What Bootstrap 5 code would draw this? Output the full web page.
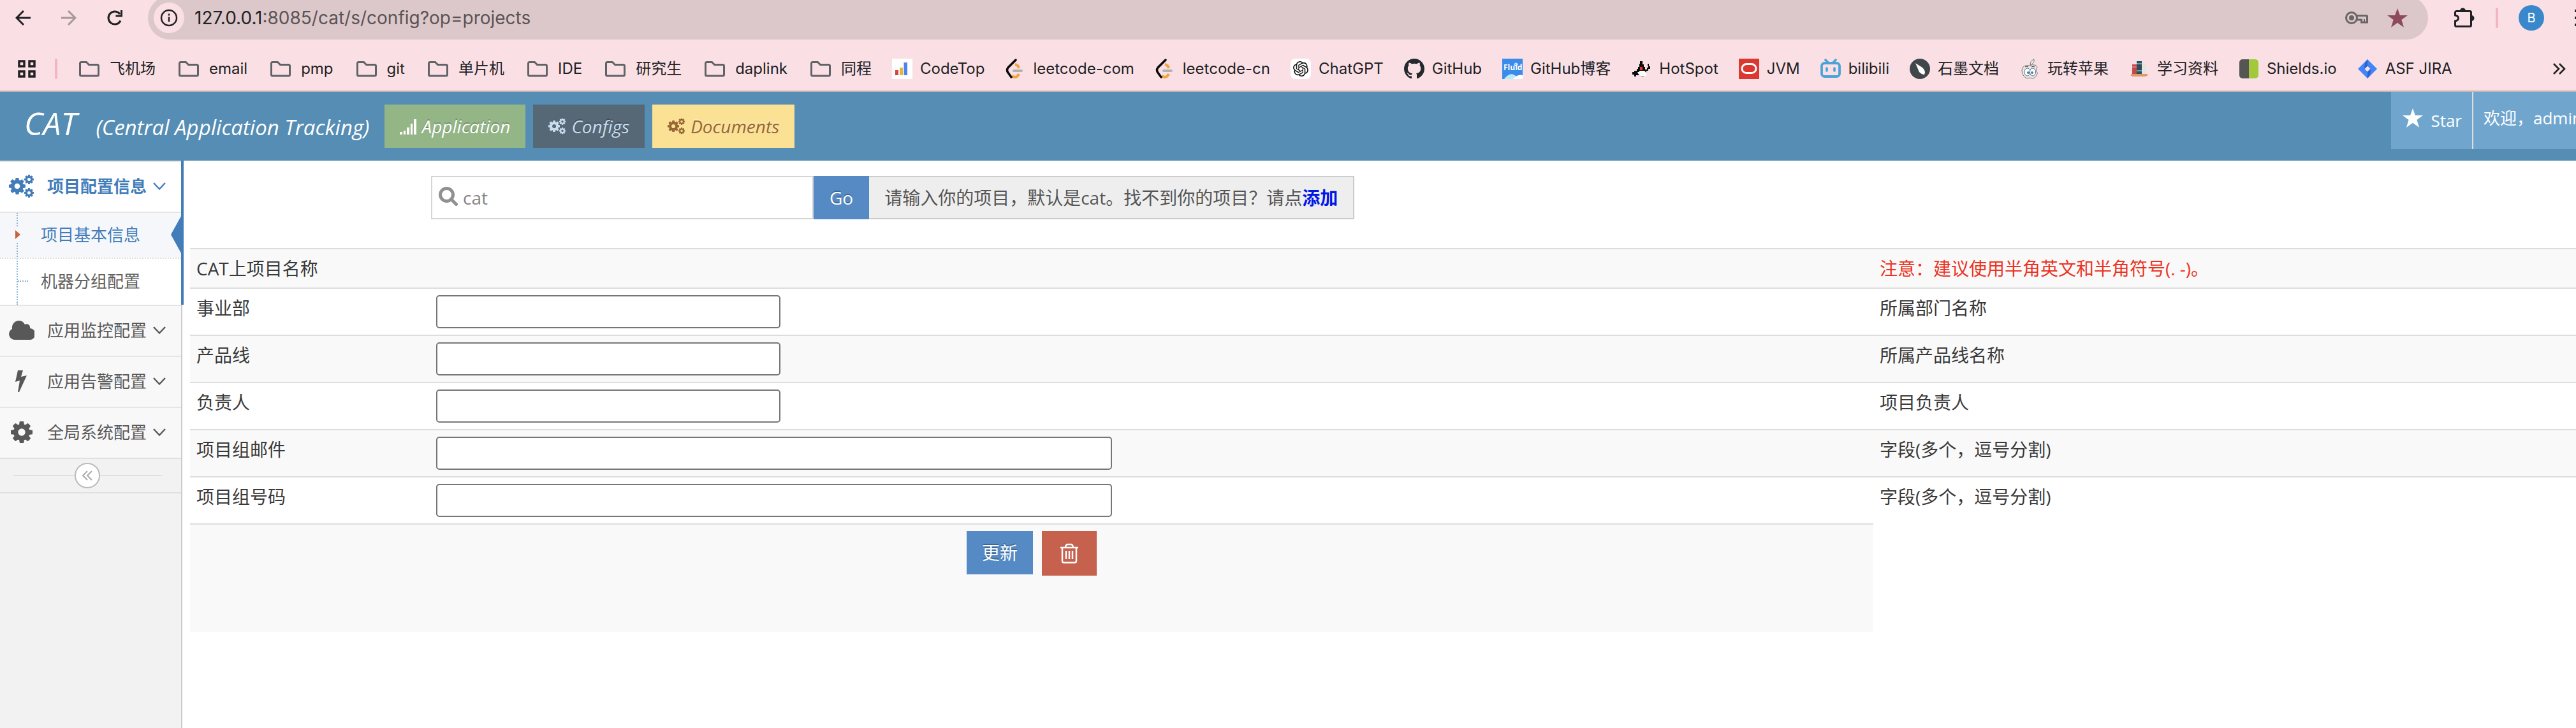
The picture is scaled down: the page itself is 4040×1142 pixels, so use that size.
<!DOCTYPE html>
<html lang="zh-CN">
<head>
<meta charset="utf-8">
<meta name="viewport" content="width=device-width, initial-scale=1">
<title>CAT - 项目基本信息</title>
<link href="https://cdn.jsdelivr.net/npm/bootstrap@5.3.0/dist/css/bootstrap.min.css" rel="stylesheet">
<style>
:root { --cat-blue: #568db4; --cat-active: #437db9; --cat-line: #ddd; }
body { font-family: "Open Sans", "Noto Sans CJK SC", sans-serif; font-size: 28px; line-height: 40px; color: #393939; background: #fff; overflow-x: hidden; min-height: 100vh; }
svg { display: block; flex-shrink: 0; }
a { text-decoration: none; }

/* Browser chrome */
.browser { background: #fae0e4; font-family: Inter, "Noto Sans CJK SC", sans-serif; color: #202124; border-bottom: 2px solid #c9b2b7; }
.toolbar { height: 74px; overflow: hidden; }
.tool { height: 56px; border: 0; background: none; padding: 0; color: #202124; flex-shrink: 0; }
.tool-nav { width: 72px; }
.omnibox { height: 68px; margin-top: -6px; border-radius: 34px; background: #dcc8ca; padding: 0 32px 0 9px; }
.site-info { width: 48px; height: 48px; border-radius: 50%; background: #fae0e4; }
.url { font-size: 28px; color: #5a5354; }
.url-host { color: #202124; }
.fav-star { color: #8c4a5c; margin-left: 30px; }
.split { width: 4px; height: 32px; border-radius: 2px; background: #f4b4c0; flex-shrink: 0; }
.avatar { width: 40px; height: 40px; border-radius: 50%; background: #3a88cc; color: #fff; font-size: 20px; }
.bookmarks { height: 68px; padding: 0 16px 0 28px; font-size: 24px; line-height: 32px; }
.bookmarks > .split { margin-left: 30px; }
.bookmarks a { color: #202124; white-space: nowrap; }
.bookmark-list { gap: 32px; margin-left: 30px; }
.bookmark { gap: 12px; }

/* Application header */
.app-bar { background: var(--cat-blue); height: 108px; color: #fff; }
.brand { padding-bottom: 4px; }
.brand-name { font-style: italic; font-size: 50px; margin-left: 38px; }
.brand-sub { font-style: italic; font-size: 33px; margin-left: 30px; margin-right: 24px; }
.btn-flat { height: 68px; padding: 0 24px; border: 0; border-radius: 0; font-size: 28px; line-height: 40px; color: #fff; text-shadow: 0 -2px 0 rgba(0,0,0,.25); display: inline-flex; align-items: center; justify-content: center; }
.btn-flat:hover { color: #fff; }
.btn-top { font-style: italic; margin-right: 12px; gap: 8px; }
.btn-app { background: #94b687; }
.btn-conf { background: #566776; color: #c8ddee; }
.btn-docs { background: #fbe194; color: #966635; text-shadow: 0 -2px 0 rgba(255,255,255,.4); }
.btn-go, .btn-update { background: #558ac5; }
.btn-drop { background: #c5614d; height: 70px; }
.btn-go { padding: 0 25px; }
.top-links { font-size: 26px; height: 90px; }
.top-links a { color: #fff; background: #70a6ce; white-space: nowrap; overflow: hidden; }
.top-star { padding: 0 16px 0 18px; gap: 12px; border-right: 2px solid #ddd; }
.top-user { width: 161px; padding-left: 16px; padding-bottom: 8px; }

/* Sidebar */
.side { width: 286px; flex-shrink: 0; background: #f2f2f2; border-right: 2px solid #ccc; font-size: 26px; }
.side-group { border-top: 2px solid #e5e5e5; background: #f8f8f8; position: relative; }
.side-head { height: 78px; padding: 0 24px 2px 14px; color: #585858; }
.side-icon { width: 44px; margin-right: 16px; }
.side-group.open { background: #fff; }
.side-group.open .side-head { color: var(--cat-active); font-weight: bold; }
.side-group.open::after { content: ""; position: absolute; top: -2px; bottom: 0; right: -4px; width: 4px; background: var(--cat-active); }
.side-sub { border-top: 2px solid #e5e5e5; position: relative; }
.side-sub::before { content: ""; position: absolute; left: 26px; top: 0; bottom: 0; border-left: 2px dotted #8fb4d4; z-index: 1; }
.side-sub a { height: 72px; padding-left: 64px; padding-bottom: 2px; color: #616161; position: relative; }
.side-sub a.current { background: #f5f7fb; color: var(--cat-active); border-bottom: 2px dotted #e0e0e0; }
.side-sub a:not(.current)::before { content: ""; position: absolute; left: 28px; width: 16px; top: 34px; border-top: 2px dotted #8fb4d4; }
.side-sub a.current { z-index: 1; background: transparent; }
.side-sub { background: linear-gradient(#f5f7fb 70px, #fff 70px); }
.caret { position: absolute; left: 22px; background: #f5f7fb; }
.pointer { position: absolute; right: 0; }
.side-toggle { height: 56px; border-top: 2px solid #e0e0e0; border-bottom: 2px solid #e0e0e0; padding: 0 30px 0 20px; }
.side-toggle hr { flex: 1; margin: 0; border-top: 2px solid #e0e0e0; opacity: 1; }
.round { width: 40px; height: 40px; border: 2px solid #bbb; border-radius: 50%; background: #fff; padding: 0; color: #aaa; }

/* Content */
.main-area { padding: 24px 0 0 12px; }
.search { margin-left: 378px; margin-bottom: 45px; height: 68px; }
.search-box { width: 600px; border: 2px solid #d5d5d5; padding: 0 10px; gap: 8px; color: #909090; }
.search-box svg { margin-bottom: 4px; }
.search-box input { border: 0; outline: 0; padding: 0; width: 100%; background: none; color: #858585; }
.search-box input::placeholder { color: #858585; }
.search-tip { background: #eee; border: 2px solid #ccc; border-left: 0; padding: 0 24px; color: #555; }
.search-tip a { color: #0017e8; font-weight: bold; }
.project-table { border-collapse: separate; border-spacing: 0; width: 100%; table-layout: fixed; }
.project-table td, .project-table th { border-top: 2px solid var(--cat-line); padding: 10px; vertical-align: top; font-weight: normal; }
.project-table tr:nth-child(odd) > * { background: #f9f9f9; }
.project-table input { display: block; height: 52px; border: 2px solid #767676; border-radius: 5px; background: #fff; padding: 0 8px; max-width: 100%; }
.col-label { width: 376px; }
.col-field { width: 60.5%; }
.w-short { width: 540px; }
.w-long { width: 1060px; }
.project-table .actions { height: 170px; }
.actions div { gap: 14px; }
.notice { color: #ec3323; }
</style>
</head>
<body class="d-flex flex-column">

<svg width="0" height="0" class="position-absolute" aria-hidden="true">
  <defs>
    <symbol id="cog" viewBox="128 128 1536 1536"><path fill="currentColor" d="M1152 896q0-106-75-181t-181-75-181 75-75 181 75 181 181 75 181-75 75-181zm512-109v222q0 12-8 23t-20 13l-185 28q-19 54-39 91 35 50 107 138 10 12 10 25t-9 23q-27 37-99 108t-94 71q-12 0-26-9l-138-108q-44 23-91 38-16 136-29 186-7 28-36 28h-222q-14 0-24.500-8.500t-11.500-21.500l-28-184q-49-16-90-37l-141 107q-10 9-25 9-14 0-25-11-126-114-165-168-7-10-7-23 0-12 8-23 15-21 51-66.500t54-70.500q-27-50-41-99l-183-27q-13-2-21-12.500t-8-23.500v-222q0-12 8-23t19-13l186-28q14-46 39-92-40-57-107-138-10-12-10-24 0-10 9-23 26-36 98.500-107.500t94.500-71.500q13 0 26 10l138 107q44-23 91-38 16-136 29-186 7-28 36-28h222q14 0 24.500 8.500t11.500 21.500l28 184q49 16 90 37l142-107q9-9 24-9 13 0 25 10 129 119 165 170 7 8 7 22 0 12-8 23-15 21-51 66.500t-54 70.500q26 50 41 98l183 28q13 2 21 12.500t8 23.500z"/></symbol>
    <symbol id="cogs" viewBox="0 0 40 36"><use href="#cog" x="0" y="5" width="26" height="26"/><use href="#cog" x="24" y="0" width="15" height="15"/><use href="#cog" x="24" y="21" width="15" height="15"/></symbol>
    <symbol id="folder" viewBox="0 0 40 32"><path d="M5.500 25V7.500a2 2 0 0 1 2-2h8l4 4h13a2 2 0 0 1 2 2V25a2 2 0 0 1-2 2h-25a2 2 0 0 1-2-2z" fill="none" stroke="#5f6368" stroke-width="3"/></symbol>
    <symbol id="star" viewBox="0 0 32 30"><path fill="currentColor" d="M16 0l3.900 11H32l-9.600 7.100L26 30l-10-7.200L6 30l3.600-11.900L0 11h12.100z"/></symbol>
    <symbol id="down" viewBox="0 0 20 12"><path d="M1 1l9 9.500L19 1" fill="none" stroke="currentColor" stroke-width="2.400"/></symbol>
    <symbol id="leet" viewBox="0 0 32 32"><path d="M16 9q5 1 6 6" fill="none" stroke="#f2a33c" stroke-width="4"/><path d="M11 27q7 5 11-3" fill="none" stroke="#f2a33c" stroke-width="4"/><path d="M14 19h12" stroke="#b3b3b3" stroke-width="4" stroke-linecap="round"/><path d="M17 2L5 14q-3 4 0 8l5 7" fill="none" stroke="#0a0a0a" stroke-width="3.500" stroke-linecap="round"/></symbol>
  </defs>
</svg>

<div class="browser">
  <div class="toolbar d-flex align-items-start">
    <button class="tool tool-nav d-flex align-items-center ps-4" aria-label="后退"><svg width="24" height="26" viewBox="0 0 24 26"><path d="M24 13H2M13 2L2 13l11 11" fill="none" stroke="currentColor" stroke-width="3"/></svg></button>
    <button class="tool tool-nav d-flex align-items-center ps-4" aria-label="前进"><svg width="24" height="26" viewBox="0 0 24 26"><path d="M0 13h22M11 2l11 11-11 11" fill="none" stroke="#a5979a" stroke-width="3"/></svg></button>
    <button class="tool d-flex align-items-center ps-4 pe-4" aria-label="重新加载"><svg width="24" height="26" viewBox="0 0 24 26"><path d="M21 17.500A10 10 0 1 1 20 7" fill="none" stroke="currentColor" stroke-width="3"/><path d="M22.500 1v9h-9" fill="none" stroke="currentColor" stroke-width="3"/></svg></button>
    <div class="omnibox d-flex align-items-center flex-grow-1 ms-3">
      <button class="site-info btn p-0 border-0 d-flex align-items-center justify-content-center" aria-label="网站信息"><svg width="28" height="28" viewBox="0 0 28 28"><circle cx="14" cy="14" r="12" fill="none" stroke="#202124" stroke-width="2.500"/><path d="M14 12.500V20M14 7.500v3" stroke="#202124" stroke-width="2.500"/></svg></button>
      <div class="url ms-3"><span class="url-host">127.0.0.1</span>:8085/cat/s/config?op=projects</div>
      <svg class="ms-auto" width="36" height="22" viewBox="0 0 36 22"><circle cx="10" cy="11" r="8.500" fill="none" stroke="#6a6566" stroke-width="3"/><circle cx="10" cy="11" r="4" fill="#6a6566"/><path d="M18 7.500h15a1.500 1.500 0 0 1 1.500 1.500v9h-9v-4H18" fill="none" stroke="#6a6566" stroke-width="3"/><path d="M30 13v5" stroke="#6a6566" stroke-width="2"/></svg>
      <svg class="fav-star" width="32" height="30"><use href="#star"/></svg>
    </div>
    <button class="tool d-flex align-items-center ms-4 ps-3" aria-label="扩展程序"><svg width="34" height="34" viewBox="0 0 34 34"><path d="M4 6.500h21.500a2 2 0 0 1 2 2v20a2 2 0 0 1-2 2H4.500a2 2 0 0 1-2-2V22q5-1 5-4.500t-5-4.500V8.500a2 2 0 0 1 2-2" fill="none" stroke="#202124" stroke-width="3"/><path d="M10 6a4.500 4.500 0 0 1 9 0zM28 13a4.500 4.500 0 0 1 0 9z" fill="#202124"/></svg></button>
    <div class="tool d-flex align-items-center px-3 mx-3"><span class="split"></span></div>
    <div class="tool d-flex align-items-center"><span class="avatar d-flex align-items-center justify-content-center">B</span></div>
    <div class="tool d-flex align-items-center ps-5"><svg width="2" height="26" viewBox="0 0 2 26"><path d="M1 0v4M1 11v4M1 22v4" stroke="#202124" stroke-width="2"/></svg></div>
  </div>

  <nav class="bookmarks d-flex align-items-center" aria-label="书签栏">
    <svg width="28" height="28" viewBox="0 0 28 28"><path d="M2 2h8v8H2zM18 2h8v8h-8zM2 18h8v8H2zM18 18h8v8h-8z" fill="none" stroke="#202124" stroke-width="3.500"/></svg>
    <span class="split"></span>
    <div class="bookmark-list d-flex align-items-center">
      <a class="bookmark d-flex align-items-center" href="#"><svg width="40" height="32"><use href="#folder"/></svg>飞机场</a>
      <a class="bookmark d-flex align-items-center" href="#"><svg width="40" height="32"><use href="#folder"/></svg>email</a>
      <a class="bookmark d-flex align-items-center" href="#"><svg width="40" height="32"><use href="#folder"/></svg>pmp</a>
      <a class="bookmark d-flex align-items-center" href="#"><svg width="40" height="32"><use href="#folder"/></svg>git</a>
      <a class="bookmark d-flex align-items-center" href="#"><svg width="40" height="32"><use href="#folder"/></svg>单片机</a>
      <a class="bookmark d-flex align-items-center" href="#"><svg width="40" height="32"><use href="#folder"/></svg>IDE</a>
      <a class="bookmark d-flex align-items-center" href="#"><svg width="40" height="32"><use href="#folder"/></svg>研究生</a>
      <a class="bookmark d-flex align-items-center" href="#"><svg width="40" height="32"><use href="#folder"/></svg>daplink</a>
      <a class="bookmark d-flex align-items-center" href="#"><svg width="40" height="32"><use href="#folder"/></svg>同程</a>
      <a class="bookmark d-flex align-items-center" href="#"><svg width="32" height="32"><path fill="#fff" d="M0 0h32v32H0z"/><path fill="#cb4a3b" d="M5 18h5v8H5z"/><path fill="#eab33a" d="M12 14h5v12h-5z"/><path fill="#4a84f0" d="M18.500 6h5.500v20h-5.500z"/></svg>CodeTop</a>
      <a class="bookmark d-flex align-items-center" href="#"><svg width="32" height="32"><use href="#leet"/></svg>leetcode-com</a>
      <a class="bookmark d-flex align-items-center" href="#"><svg width="32" height="32"><use href="#leet"/></svg>leetcode-cn</a>
      <a class="bookmark d-flex align-items-center" href="#"><svg width="32" height="32" viewBox="0 0 32 32"><rect width="32" height="32" rx="7" fill="#fff"/><path transform="translate(4 4)" fill="#111" d="M22.282 9.821a5.985 5.985 0 0 0-.516-4.911 6.046 6.046 0 0 0-6.510-2.900A6.065 6.065 0 0 0 4.981 4.182a5.985 5.985 0 0 0-3.998 2.900 6.046 6.046 0 0 0 .743 7.097 5.980 5.980 0 0 0 .511 4.911 6.051 6.051 0 0 0 6.515 2.900A5.985 5.985 0 0 0 13.260 24a6.056 6.056 0 0 0 5.772-4.206 5.989 5.989 0 0 0 3.998-2.900 6.056 6.056 0 0 0-.748-7.073zm-9.022 12.608a4.476 4.476 0 0 1-2.876-1.041l.142-.080 4.778-2.758a.795.795 0 0 0 .393-.681v-6.737l2.020 1.169a.071.071 0 0 1 .038.052v5.583a4.504 4.504 0 0 1-4.495 4.494zm-9.661-4.125a4.471 4.471 0 0 1-.535-3.014l.142.085 4.783 2.758a.771.771 0 0 0 .781 0l5.843-3.369v2.332a.080.080 0 0 1-.033.062L9.740 19.950a4.499 4.499 0 0 1-6.141-1.646zM2.341 7.896a4.485 4.485 0 0 1 2.366-1.973V11.600a.766.766 0 0 0 .388.677l5.814 3.354-2.020 1.169a.076.076 0 0 1-.071 0l-4.830-2.787A4.504 4.504 0 0 1 2.341 7.872zm16.596 3.856L13.104 8.364 15.119 7.200a.076.076 0 0 1 .071 0l4.830 2.791a4.494 4.494 0 0 1-.677 8.104v-5.677a.790.790 0 0 0-.407-.667zm2.011-3.023l-.142-.085-4.774-2.782a.776.776 0 0 0-.785 0L9.409 9.230V6.897a.066.066 0 0 1 .028-.062l4.830-2.787a4.499 4.499 0 0 1 6.680 4.660zM8.307 12.863l-2.020-1.164a.080.080 0 0 1-.038-.057V6.074a4.499 4.499 0 0 1 7.376-3.454l-.142.081L8.704 5.459a.795.795 0 0 0-.393.681zm1.098-2.365l2.602-1.500 2.607 1.500v2.999l-2.597 1.500-2.607-1.500Z"/></svg>ChatGPT</a>
      <a class="bookmark d-flex align-items-center" href="#"><svg width="32" height="32" viewBox="0 0 16 16"><path fill="#24292e" d="M8 0C3.580 0 0 3.580 0 8c0 3.540 2.290 6.530 5.470 7.590.4.070.55-.17.55-.38 0-.19-.010-.82-.010-1.490-2.010.37-2.530-.49-2.690-.94-.090-.23-.48-.94-.82-1.130-.28-.15-.68-.52-.010-.53.63-.010 1.080.58 1.230.82.72 1.210 1.870.87 2.330.66.070-.52.28-.87.51-1.070-1.780-.2-3.640-.89-3.640-3.950 0-.87.31-1.590.82-2.150-.080-.2-.36-1.020.080-2.120 0 0 .67-.21 2.200.82.64-.18 1.320-.27 2-.27s1.360.090 2 .27c1.530-1.040 2.200-.82 2.200-.82.44 1.100.16 1.920.080 2.120.51.56.82 1.270.82 2.150 0 3.070-1.870 3.750-3.650 3.950.29.25.54.73.54 1.480 0 1.070-.010 1.930-.010 2.200 0 .21.15.46.55.38A8.010 8.010 0 0 0 16 8c0-4.420-3.580-8-8-8z"/></svg>GitHub</a>
      <a class="bookmark d-flex align-items-center" href="#"><svg width="32" height="32" viewBox="0 0 32 32"><path fill="#3b8bea" d="M0 0h32v32H0z"/><path fill="#b9ecfb" d="M3 32q10-13 19-4l2 4z"/><path fill="#fff" d="M17 32q7-8 15-6v6z"/><text x="2" y="18" font-family="Open Sans" font-weight="bold" font-size="12" fill="#fff">Fluid</text><circle cx="21.500" cy="9" r="2" fill="none" stroke="#fff" stroke-width="1.200"/></svg>GitHub博客</a>
      <a class="bookmark d-flex align-items-center" href="#"><svg width="32" height="32" viewBox="0 0 32 32"><path fill="#0a0a0a" d="M14 4h4v5h2v4h2v4h3v-3h2v-3h-1V8h2v4h2v4h-3v3h-3v8h-3v-6h-8v5H8v2H5v-3H2v-4h3v-2h4v-3h2v-3h2V8h1z"/><path fill="#fff" d="M10 21h3v-2h8l3 3v5h-9v-2h-3z"/><path fill="#e23b20" d="M14 13h4v5h-4z"/><path fill="#6a3" d="M16 27h4v1h-4z"/></svg>HotSpot</a>
      <a class="bookmark d-flex align-items-center" href="#"><svg width="32" height="32" viewBox="0 0 32 32"><path fill="#db3832" d="M0 0h32v32H0z"/><rect x="5" y="8.500" width="22" height="14" rx="7" fill="none" stroke="#fff" stroke-width="3"/></svg>JVM</a>
      <a class="bookmark d-flex align-items-center" href="#"><svg width="32" height="32" viewBox="0 0 32 32"><rect x="2" y="7" width="28" height="21" rx="4.500" fill="none" stroke="#4aa3d8" stroke-width="3.800"/><path d="M8 2l4 4M24 2l-4 4M10 15v4M22 15v4" stroke="#4aa3d8" stroke-width="3.600" stroke-linecap="round"/></svg>bilibili</a>
      <a class="bookmark d-flex align-items-center" href="#"><svg width="32" height="32" viewBox="0 0 32 32"><circle cx="16" cy="16" r="16" fill="#41464a"/><path fill="#fff" d="M9 7l11 7q6 6 3 11-4 0-8-4z"/></svg>石墨文档</a>
      <a class="bookmark d-flex align-items-center" href="#"><svg width="32" height="32" viewBox="0 0 32 32"><path d="M17 10q0-7 6-9 1 6-6 9z" fill="#eee" stroke="#777"/><path d="M16 11q5-2.500 10-.5 2 1.500 2 3-4 4 .5 9-2 7-7 8.500l-5-1-5 1Q4 27 4 18q1-9 12-7z" fill="#e8e8e8" stroke="#777"/><ellipse cx="12.500" cy="21" rx="4.500" ry="6" fill="#fff" stroke="#666"/><ellipse cx="21" cy="21" rx="4.500" ry="6" fill="#fff" stroke="#666"/><circle cx="14" cy="22" r="2" fill="#3a7fc4"/><circle cx="20" cy="22" r="2" fill="#3a7fc4"/><path d="M9 13q3-2 5 0M19 13q3-2 5 0" fill="none" stroke="#333"/></svg>玩转苹果</a>
      <a class="bookmark d-flex align-items-center" href="#"><svg width="32" height="32" viewBox="0 0 32 32"><path fill="#c04a48" d="M5 9h7v15H5z"/><path fill="#34495e" d="M12 4h8v20h-8z"/><path fill="#e3e6de" d="M20 7h7v17h-7z"/><path stroke="#f0b6a8" d="M5 13h7"/><path stroke="#5aa" stroke-width="2" d="M12 8h8M12 19h8"/><path fill="#dd9a66" d="M3 24h26v3h-2v1H5v-1H3z"/></svg>学习资料</a>
      <a class="bookmark d-flex align-items-center" href="#"><svg width="32" height="32" viewBox="0 0 32 32"><path fill="#555" d="M16 1H6a5 5 0 0 0-5 5v20a5 5 0 0 0 5 5h10z"/><path fill="#a2c93c" d="M16 1h10a5 5 0 0 1 5 5v20a5 5 0 0 1-5 5H16z"/></svg>Shields.io</a>
      <a class="bookmark d-flex align-items-center" href="#"><svg width="32" height="32" viewBox="0 0 32 32"><path fill="#4285f7" fill-rule="evenodd" d="M16 1l15 15-15 15L1 16zM16 11.500L11.500 16l4.500 4.500 4.500-4.500z"/><path fill="#2a60d0" d="M16 1v10.500l-4.500 4.500Q10 8 16 1zM16 31V20.500l4.500-4.500q1.500 8-4.500 15z"/></svg>ASF JIRA</a>
    </div>
    <button class="btn p-0 border-0 ms-auto" aria-label="更多书签"><svg width="20" height="18" viewBox="0 0 20 18"><path d="M1 1l8 8-8 8M10 1l8 8-8 8" fill="none" stroke="#202124" stroke-width="2.600"/></svg></button>
  </nav>
</div>

<header class="app-bar d-flex">
  <div class="d-flex align-items-center">
    <div class="brand d-flex align-items-baseline"><span class="brand-name">CAT</span><span class="brand-sub">(Central Application Tracking)</span></div>
    <a class="btn-flat btn-top btn-app" href="#"><svg width="26" height="26" viewBox="0 0 26 26"><path fill="currentColor" d="M0 22h4v4H0zM6 20h3v6H6zM11 15h4v11h-4zM17 9h3v17h-3zM22 2h4v24h-4z"/></svg>Application</a>
    <a class="btn-flat btn-top btn-conf" href="#"><svg width="28" height="26"><use href="#cogs"/></svg>Configs</a>
    <a class="btn-flat btn-top btn-docs" href="#"><svg width="28" height="26"><use href="#cogs"/></svg>Documents</a>
  </div>
  <div class="top-links d-flex ms-auto">
    <a class="top-star d-flex align-items-center" href="#"><svg class="mb-2" width="32" height="30"><use href="#star"/></svg>Star</a>
    <a class="top-user d-flex align-items-center" href="#">欢迎，admin</a>
  </div>
</header>

<div class="d-flex flex-grow-1">
  <nav class="side" aria-label="配置菜单">
    <div class="side-group open">
      <a class="side-head d-flex align-items-center" href="#"><span class="side-icon"><svg width="40" height="36"><use href="#cogs"/></svg></span>项目配置信息<svg class="ms-auto" width="20" height="12"><use href="#down"/></svg></a>
      <div class="side-sub">
        <a class="current d-flex align-items-center" href="#"><svg class="caret" width="12" height="26" viewBox="0 0 12 26"><path fill="#c5643c" d="M2 6l8 7-8 7z"/></svg>项目基本信息<svg class="pointer" width="16" height="58" viewBox="0 0 16 58"><path fill="#437db9" d="M16 0v58L0 29z"/></svg></a>
        <a class="d-flex align-items-center" href="#">机器分组配置</a>
      </div>
    </div>
    <div class="side-group">
      <a class="side-head d-flex align-items-center" href="#"><span class="side-icon"><svg width="40" height="30" viewBox="0 0 40 30"><path fill="currentColor" d="M9 30a9 9 0 0 1-4-17C4 5 10 0 16 0q6 0 9 6c4-2 9 1 8 6a9 9 0 0 1-1 18z"/></svg></span>应用监控配置<svg class="ms-auto" width="20" height="12"><use href="#down"/></svg></a>
    </div>
    <div class="side-group">
      <a class="side-head d-flex align-items-center" href="#"><span class="side-icon"><svg width="40" height="34" viewBox="0 0 40 34"><path fill="currentColor" d="M14 0h8l-3 10 9-2-12 26h-2l3-18-7 2z"/></svg></span>应用告警配置<svg class="ms-auto" width="20" height="12"><use href="#down"/></svg></a>
    </div>
    <div class="side-group">
      <a class="side-head d-flex align-items-center" href="#"><span class="side-icon"><svg width="40" height="34"><use href="#cog"/></svg></span>全局系统配置<svg class="ms-auto" width="20" height="12"><use href="#down"/></svg></a>
    </div>
    <div class="side-toggle d-flex align-items-center">
      <hr><button class="round d-flex align-items-center justify-content-center" aria-label="收起菜单"><svg width="16" height="16" viewBox="0 0 16 16"><path d="M8 1L1 8l7 7M15 1L8 8l7 7" fill="none" stroke="currentColor" stroke-width="2"/></svg></button><hr>
    </div>
  </nav>

  <main class="main-area flex-grow-1">
    <form class="search d-flex">
      <div class="search-box d-flex align-items-center">
        <svg width="30" height="30" viewBox="0 0 30 30"><circle cx="12.500" cy="12.500" r="10" fill="none" stroke="currentColor" stroke-width="5"/><path d="M19.500 19.500l8 8" stroke="currentColor" stroke-width="5" stroke-linecap="round"/></svg>
        <input type="text" placeholder="cat" aria-label="项目">
      </div>
      <button type="button" class="btn-flat btn-go">Go</button>
      <div class="search-tip d-flex align-items-center">请输入你的项目，默认是cat。找不到你的项目？请点<a href="#">添加</a></div>
    </form>

    <table class="project-table">
      <colgroup><col class="col-label"><col class="col-field"><col></colgroup>
      <tbody>
        <tr><th scope="row">CAT上项目名称</th><td></td><td class="notice">注意：建议使用半角英文和半角符号(. -)。</td></tr>
        <tr><th scope="row"><label for="bu">事业部</label></th><td><input id="bu" class="w-short" type="text"></td><td>所属部门名称</td></tr>
        <tr><th scope="row"><label for="line">产品线</label></th><td><input id="line" class="w-short" type="text"></td><td>所属产品线名称</td></tr>
        <tr><th scope="row"><label for="owner">负责人</label></th><td><input id="owner" class="w-short" type="text"></td><td>项目负责人</td></tr>
        <tr><th scope="row"><label for="mail">项目组邮件</label></th><td><input id="mail" class="w-long" type="text"></td><td>字段(多个，逗号分割)</td></tr>
        <tr><th scope="row"><label for="phone">项目组号码</label></th><td><input id="phone" class="w-long" type="text"></td><td>字段(多个，逗号分割)</td></tr>
        <tr><td colspan="2" class="actions"><div class="d-flex justify-content-center align-items-start"><button type="button" class="btn-flat btn-update">更新</button><button type="button" class="btn-flat btn-drop" aria-label="删除"><svg class="mx-1" width="30" height="32" viewBox="0 0 30 32"><path d="M1 7h28M9 6q1-4 3-4h6q2 0 3 4M4 7v21q0 2.500 2.500 2.500h17Q26 30.500 26 28V7M10 12v13M15 12v13M20 12v13" fill="none" stroke="#fff" stroke-width="2.500"/></svg></button></div></td></tr>
      </tbody>
    </table>
  </main>
</div>

<script src="https://cdn.jsdelivr.net/npm/bootstrap@5.3.0/dist/js/bootstrap.bundle.min.js"></script>
</body>
</html>
